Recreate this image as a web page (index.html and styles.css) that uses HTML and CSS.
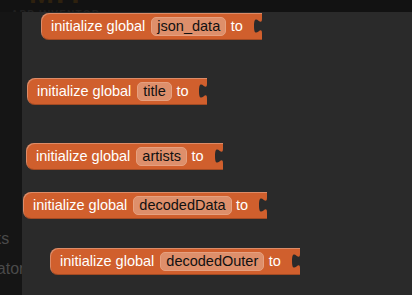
FILE: index.html
```html
<!DOCTYPE html>
<html>
<head>
<meta charset="utf-8">
<link rel="stylesheet" href="styles.css">
</head>
<body>
<div class="app">
  <header class="topbar">
    <div class="logo">MIT</div>
    <div class="brand">APP INVENTOR</div>
  </header>
  <aside class="sidebar">
    <div class="side-item s1">Blocks</div>
    <div class="side-item s2">Translator</div>
  </aside>
  <main class="workspace">
    <div class="block b1">
      <span class="label">initialize global</span>
      <span class="field">json_data</span>
      <span class="label to">to</span>
      <svg class="notch" viewBox="0 0 9 27" width="9" height="27"><path d="M9,5.5 c0,10 -8,-8 -8,7.5 s8,-2.5 8,7.5 Z"/></svg>
    </div>
    <div class="block b2">
      <span class="label">initialize global</span>
      <span class="field">title</span>
      <span class="label to">to</span>
      <svg class="notch" viewBox="0 0 9 27" width="9" height="27"><path d="M9,5.5 c0,10 -8,-8 -8,7.5 s8,-2.5 8,7.5 Z"/></svg>
    </div>
    <div class="block b3">
      <span class="label">initialize global</span>
      <span class="field">artists</span>
      <span class="label to">to</span>
      <svg class="notch" viewBox="0 0 9 27" width="9" height="27"><path d="M9,5.5 c0,10 -8,-8 -8,7.5 s8,-2.5 8,7.5 Z"/></svg>
    </div>
    <div class="block b4">
      <span class="label">initialize global</span>
      <span class="field">decodedData</span>
      <span class="label to">to</span>
      <svg class="notch" viewBox="0 0 9 27" width="9" height="27"><path d="M9,5.5 c0,10 -8,-8 -8,7.5 s8,-2.5 8,7.5 Z"/></svg>
    </div>
    <div class="block b5">
      <span class="label">initialize global</span>
      <span class="field">decodedOuter</span>
      <span class="label to">to</span>
      <svg class="notch" viewBox="0 0 9 27" width="9" height="27"><path d="M9,5.5 c0,10 -8,-8 -8,7.5 s8,-2.5 8,7.5 Z"/></svg>
    </div>
  </main>
</div>
</body>
</html>
```
FILE: styles.css
```css
html, body {
  margin: 0;
  padding: 0;
}
body {
  width: 412px;
  height: 295px;
  overflow: hidden;
  background: #121212;
  font-family: "Liberation Sans", Arial, sans-serif;
}
.app {
  display: grid;
  grid-template-columns: 22px 1fr;
  grid-template-rows: 12px 1fr;
  width: 412px;
  height: 295px;
}
.topbar {
  grid-column: 1 / 3;
  grid-row: 1;
  height: 12px;
  overflow: hidden;
  padding-left: 11px;
}
.logo {
  margin-top: -22px;
  margin-left: 18px;
  height: 30px;
  font-size: 30px;
  font-weight: bold;
  line-height: 30px;
  letter-spacing: 2px;
  color: #2e210e;
}
.brand {
  margin-top: 2px;
  font-size: 10px;
  line-height: 10px;
  font-weight: bold;
  letter-spacing: 1.2px;
  color: #202020;
}
.sidebar {
  grid-column: 1;
  grid-row: 2;
  background: #151515;
  overflow: hidden;
  display: flex;
  flex-direction: column;
  padding-top: 217px;
}
.side-item {
  font-size: 16px;
  line-height: 20px;
  color: #4a4a4a;
  white-space: nowrap;
}
.s1 { margin-left: -38px; }
.s2 { margin-top: 10px; margin-left: -47px; }
.workspace {
  grid-column: 2;
  grid-row: 2;
  position: relative;
  background: #2a2a2a;
}
.block {
  position: absolute;
  display: flex;
  align-items: center;
  box-sizing: border-box;
  height: 27px;
  padding-left: 10px;
  background: #d05f2d;
  border-radius: 8px 0 0 8px;
  box-shadow: inset 1px 1px 0 rgba(255, 255, 255, 0.28), inset 0 -1px 0 rgba(0, 0, 0, 0.22);
}
.label {
  color: #ffffff;
  font-size: 14.5px;
  line-height: 17px;
  white-space: nowrap;
}
.field {
  box-sizing: border-box;
  height: 19px;
  margin-left: 6px;
  padding: 0 5px;
  border: 1px solid #e6a07f;
  border-radius: 5px;
  background: #de8f6b;
  color: #111111;
  font-size: 14.5px;
  line-height: 17px;
  white-space: nowrap;
}
.to {
  margin-left: 4.5px;
}
.notch {
  display: block;
  margin-left: 10px;
  fill: #2a2a2a;
}
.b1 { left: 19px; top: 1px; }
.b2 { left: 5px; top: 66px; }
.b3 { left: 4px; top: 131px; }
.b4 { left: 1px; top: 180px; }
.b5 { left: 28px; top: 236px; }
```
